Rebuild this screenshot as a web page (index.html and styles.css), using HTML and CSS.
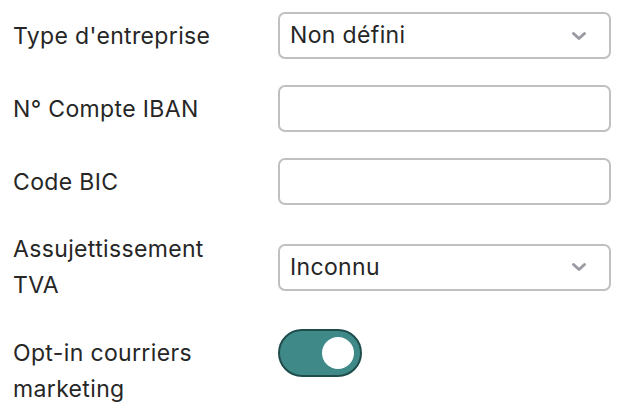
FILE: index.html
```html
<!DOCTYPE html>
<html lang="fr">
<head>
<meta charset="utf-8">
<link rel="stylesheet" href="styles.css">
</head>
<body>
<form class="form">
  <div class="row">
    <label class="label">Type d'entreprise</label>
    <div class="select"><span class="value">Non défini</span>
      <svg class="chev" width="16" height="10" viewBox="0 0 16 10"><path d="M2.5 2.5 L8 7.5 L13.5 2.5" fill="none" stroke="#9b9ba3" stroke-width="3" stroke-linecap="round" stroke-linejoin="round"/></svg>
    </div>
  </div>
  <div class="row">
    <label class="label">N° Compte IBAN</label>
    <div class="input"></div>
  </div>
  <div class="row">
    <label class="label">Code BIC</label>
    <div class="input"></div>
  </div>
  <div class="row">
    <label class="label">Assujettissement<br>TVA</label>
    <div class="select"><span class="value">Inconnu</span>
      <svg class="chev" width="16" height="10" viewBox="0 0 16 10"><path d="M2.5 2.5 L8 7.5 L13.5 2.5" fill="none" stroke="#9b9ba3" stroke-width="3" stroke-linecap="round" stroke-linejoin="round"/></svg>
    </div>
  </div>
  <div class="row row-top">
    <label class="label label-pad">Opt-in courriers<br>marketing</label>
    <div class="toggle"><span class="knob"></span></div>
  </div>
</form>
</body>
</html>
```
FILE: styles.css
```css
html, body {
  margin: 0;
  padding: 0;
  background: #ffffff;
}
body {
  font-family: Inter, "Noto Sans", sans-serif;
  font-size: 23px;
  letter-spacing: 0.35px;
  color: #262626;
}
.form {
  padding: 12px 0 0 13px;
  display: flex;
  flex-direction: column;
  gap: 26px;
}
.row {
  display: grid;
  grid-template-columns: 265px 333px;
  align-items: center;
}
.row-top {
  align-items: start;
}
.label {
  line-height: 36px;
}
.label-pad {
  padding-top: 6px;
}
.select, .input {
  box-sizing: border-box;
  height: 47px;
  border: 2px solid #c0c0c0;
  border-radius: 7px;
  background: #fff;
}
.select {
  display: flex;
  align-items: center;
  justify-content: space-between;
  padding: 0 22px 0 10px;
}
.value {
  line-height: 1;
}
.chev {
  display: block;
}
.toggle {
  box-sizing: border-box;
  width: 84px;
  height: 48px;
  border-radius: 24px;
  background: #3f8a88;
  border: 2px solid #1e4d4c;
  display: flex;
  align-items: center;
  justify-content: flex-end;
  padding-right: 6px;
}
.knob {
  width: 32px;
  height: 32px;
  border-radius: 50%;
  background: #fff;
}
```
